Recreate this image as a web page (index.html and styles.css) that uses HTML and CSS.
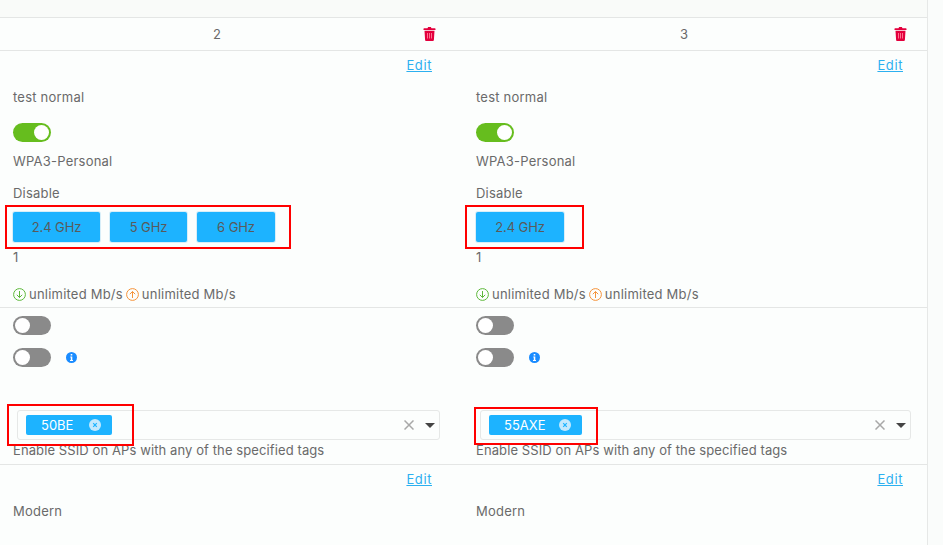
FILE: index.html
```html
<!DOCTYPE html>
<html lang="en">
<head>
<meta charset="utf-8">
<title>SSID comparison</title>
<link rel="stylesheet" href="styles.css">
</head>
<body>
<svg class="defs" width="0" height="0" aria-hidden="true">
  <symbol id="trash" viewBox="0 0 12 14">
    <path fill="currentColor" d="M4 1.200 4.600 0h2.800L8 1.200h3.400c.3 0 .6.300.6.600v1.100H0V1.800c0-.3.300-.6.600-.6zM1 3.800h10l-.6 9.300c0 .5-.4.900-.9.900h-7c-.5 0-.9-.4-.9-.9z"/>
    <path stroke="#ff6f8f" stroke-width="1" d="M4 6v5.500M6 6v5.500M8 6v5.500"/>
  </symbol>
  <symbol id="down" viewBox="0 0 13 13">
    <circle cx="6.500" cy="6.500" r="5.900" fill="none" stroke="currentColor"/>
    <path fill="none" stroke="currentColor" d="M6.500 3v6.500M3.800 6.800l2.700 2.700 2.700-2.700"/>
  </symbol>
  <symbol id="up" viewBox="0 0 13 13">
    <circle cx="6.500" cy="6.500" r="5.900" fill="none" stroke="currentColor"/>
    <path fill="none" stroke="currentColor" d="M6.500 10V3.500M3.800 6.200l2.700-2.700 2.700 2.700"/>
  </symbol>
  <symbol id="info" viewBox="0 0 11 11">
    <circle cx="5.500" cy="5.500" r="5.500" fill="currentColor"/>
    <path fill="#fff" d="M4.700 2h1.600v1.500H4.700zM4.300 4.400h2v3.700h.7v1H4v-1h.8V5.400h-.5z"/>
  </symbol>
  <symbol id="tagx" viewBox="0 0 12 12">
    <circle cx="6" cy="6" r="6" fill="#c4e9fd"/>
    <path fill="none" stroke="#1db3ff" stroke-width="1.200" d="M4.200 4.200l3.600 3.600M7.800 4.200 4.200 7.800"/>
  </symbol>
  <symbol id="clear" viewBox="0 0 10 10">
    <path fill="none" stroke="currentColor" stroke-width="1.500" d="M.5.500l9 9M9.500.500l-9 9"/>
  </symbol>
</svg>

<main class="table">
  <div class="cell head head-a"><span class="num">2</span><svg class="trash"><use href="#trash"/></svg></div>
  <div class="cell head head-b"><span class="num">3</span><svg class="trash"><use href="#trash"/></svg></div>

  <section class="cell sec sec-a">
    <a class="edit" href="#">Edit</a>
    <p class="line gap-14">test normal</p>
    <span class="toggle on gap-17"></span>
    <p class="line gap-10">WPA3-Personal</p>
    <p class="line gap-14">Disable</p>
    <div class="bands">
      <span class="band w-87">2.4 GHz</span>
      <span class="band w-77">5 GHz</span>
      <span class="band w-78">6 GHz</span>
    </div>
    <p class="line gap-6">1</p>
    <p class="line rates"><svg class="rate green"><use href="#down"/></svg>unlimited Mb/s<svg class="rate orange"><use href="#up"/></svg>unlimited Mb/s</p>
  </section>
  <section class="cell sec sec-b">
    <a class="edit" href="#">Edit</a>
    <p class="line gap-14">test normal</p>
    <span class="toggle on gap-17"></span>
    <p class="line gap-10">WPA3-Personal</p>
    <p class="line gap-14">Disable</p>
    <div class="bands">
      <span class="band w-88">2.4 GHz</span>
    </div>
    <p class="line gap-6">1</p>
    <p class="line rates"><svg class="rate green"><use href="#down"/></svg>unlimited Mb/s<svg class="rate orange"><use href="#up"/></svg>unlimited Mb/s</p>
  </section>

  <section class="cell tags tags-a">
    <span class="toggle"></span>
    <div class="toggle-row"><span class="toggle"></span><svg class="info"><use href="#info"/></svg></div>
    <div class="select">
      <span class="tag tag-a">50BE<svg class="tag-x"><use href="#tagx"/></svg></span>
      <svg class="clear"><use href="#clear"/></svg><span class="caret"></span>
    </div>
    <p class="line hint">Enable SSID on APs with any of the specified tags</p>
  </section>
  <section class="cell tags tags-b">
    <span class="toggle"></span>
    <div class="toggle-row"><span class="toggle"></span><svg class="info"><use href="#info"/></svg></div>
    <div class="select">
      <span class="tag tag-b">55AXE<svg class="tag-x"><use href="#tagx"/></svg></span>
      <svg class="clear"><use href="#clear"/></svg><span class="caret"></span>
    </div>
    <p class="line hint">Enable SSID on APs with any of the specified tags</p>
  </section>

  <section class="cell sec sec-a">
    <a class="edit" href="#">Edit</a>
    <p class="line gap-14">Modern</p>
  </section>
  <section class="cell sec sec-b">
    <a class="edit" href="#">Edit</a>
    <p class="line gap-14">Modern</p>
  </section>

  <i class="mark mark-1"></i>
  <i class="mark mark-2"></i>
  <i class="mark mark-3"></i>
  <i class="mark mark-4"></i>
</main>
</body>
</html>
```

FILE: styles.css
```css
* { box-sizing: border-box; }
html, body { margin: 0; height: 100%; overflow: hidden; }
body {
  font-family: Inter, "Open Sans", "Liberation Sans", sans-serif;
  font-size: 13px;
  letter-spacing: .22px;
  color: #6a6a6a;
  background: #fafcfb;
}
.defs { position: absolute; }
p { margin: 0; }

.table {
  position: relative;
  width: 928px;
  height: 545px;
  padding-top: 17px;
  display: grid;
  grid-template-columns: 463px 464px;
  grid-template-rows: 33px 257px 157px 1fr;
  border-right: 1px solid #e6e8e7;
  background: linear-gradient(#f9fbf9 17px, #fcfefd 17px);
}
.cell { border-top: 1px solid #e4e6e5; }

.head { display: flex; align-items: center; position: relative; padding-bottom: 1px; }
.head-a { padding-left: 213px; }
.head-b { padding-left: 217px; }
.num { line-height: 18px; }
.trash { width: 13px; height: 14px; color: #e3003d; position: absolute; top: 9px; }
.head-a .trash { left: 423px; }
.head-b .trash { left: 431px; }

.sec, .tags { display: flex; flex-direction: column; align-items: flex-start; padding-left: 13px; }
.sec { padding-top: 5px; }
.sec-a { padding-right: 31px; }
.sec-b { padding-right: 24px; }

.edit { align-self: flex-end; line-height: 18px; letter-spacing: .6px; color: #2cb0f0; text-decoration: underline; }
.line { line-height: 18px; }
.gap-6 { margin-top: 6px; }
.gap-10 { margin-top: 10px; }
.gap-14 { margin-top: 14px; }
.gap-17 { margin-top: 17px; }

.toggle {
  display: block;
  position: relative;
  width: 38px;
  height: 19px;
  border-radius: 10px;
  background: #8a8a8a;
  flex: none;
}
.toggle::after {
  content: "";
  position: absolute;
  left: 2px;
  top: 2px;
  width: 15px;
  height: 15px;
  border-radius: 50%;
  background: #fff;
}
.toggle.on { background: #66bd1e; }
.toggle.on::after { left: 21px; }

.bands { display: flex; gap: 10px; margin-top: 10px; }
.band {
  height: 30px;
  line-height: 30px;
  letter-spacing: -.1px;
  text-align: center;
  background: #1db3ff;
  border-radius: 2px;
  box-shadow: 0 0 0 1px #d8eef8;
  color: #5a5a5a;
}
.w-87 { width: 87px; }
.w-88 { width: 88px; }
.w-77 { width: 77px; }
.w-78 { width: 78px; }

.rates { display: flex; align-items: center; margin-top: 19px; }
.rate { width: 13px; height: 13px; flex: none; }
.green { color: #5db83a; margin-right: 3px; }
.orange { color: #f5933a; margin: 0 3px; }

.tags { padding-top: 8px; }
.toggle-row { display: flex; align-items: center; margin-top: 13px; }
.info { width: 11px; height: 11px; color: #1a8cff; margin-left: 15px; }

.select {
  display: flex;
  align-items: center;
  height: 30px;
  margin-top: 43px;
  margin-left: 4px;
  padding: 0 4px 0 8px;
  border: 1px solid #e6e8e7;
  border-radius: 3px;
}
.tags-a .select { width: 423px; }
.tags-b .select { width: 431px; }
.hint { margin-top: 1px; letter-spacing: .1px; }

.tag {
  display: flex;
  align-items: center;
  height: 20px;
  letter-spacing: 0;
  border-radius: 2px;
  background: #1db3ff;
  color: #fff;
  padding-left: 15px;
}
.tag-a { width: 86px; }
.tag-b { width: 93px; }
.tag-x { width: 12px; height: 12px; margin-left: auto; margin-right: 11px; }
.clear { width: 10px; height: 10px; margin-left: auto; color: #a8a8a8; }
.caret {
  margin-left: 11px;
  border-left: 5px solid transparent;
  border-right: 5px solid transparent;
  border-top: 5px solid #444;
}

.mark { position: absolute; border: 2px solid #f00; pointer-events: none; }
.mark-1 { left: 5px; top: 205px; width: 286px; height: 44px; }
.mark-2 { left: 465px; top: 205px; width: 119px; height: 44px; }
.mark-3 { left: 7px; top: 404px; width: 127px; height: 42px; }
.mark-4 { left: 474px; top: 407px; width: 124px; height: 38px; }
```
